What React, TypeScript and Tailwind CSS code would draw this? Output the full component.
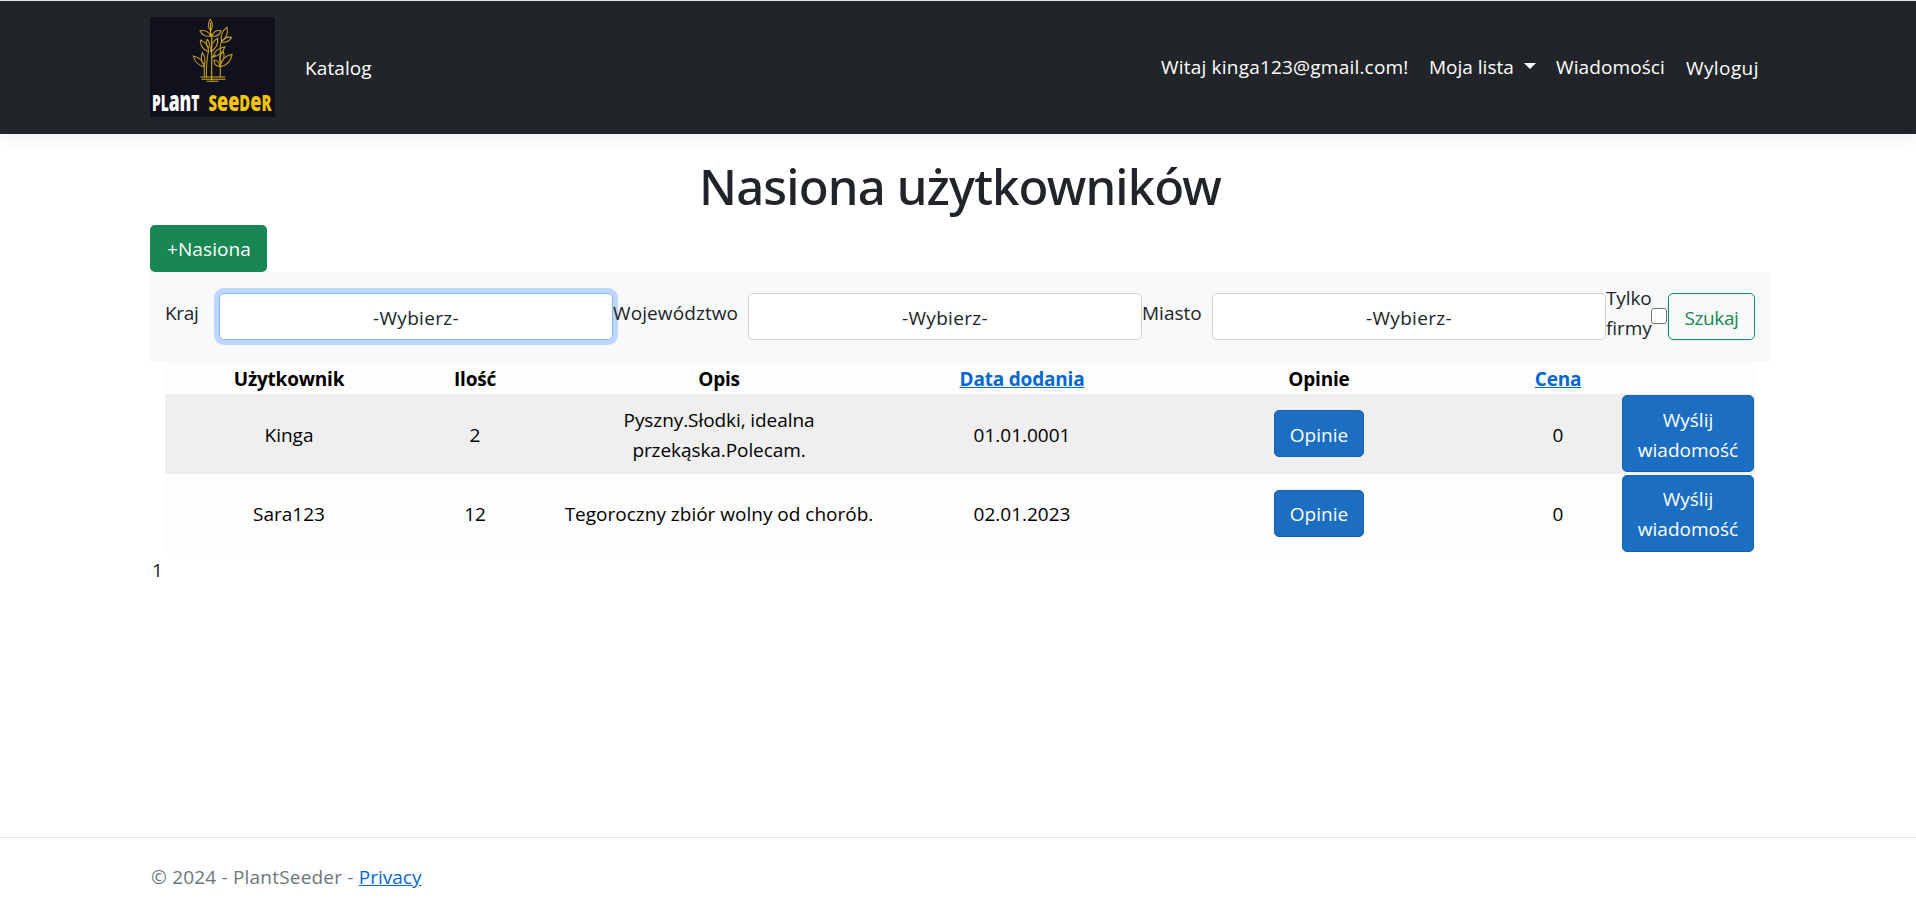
import type { ReactNode } from "react";

type Leaf = [number, number, number, number, number];

// Each leaf runs from its base to its tip; the last number is the bulge.
const leaves: Leaf[] = [
  [60.5, 14, 60.3, 2.3, 4],
  [60.8, 19, 50, 13.7, 4.5],
  [62, 19, 71, 13.7, 4.5],
  [71.5, 24.7, 77, 10.3, 5],
  [71.5, 25, 81.7, 20.3, 4],
  [58.5, 34.7, 50.3, 23, 5],
  [58.5, 31, 57.3, 22.5, 3],
  [60.7, 34.7, 67.7, 21.3, 5],
  [62.5, 40.3, 75, 29.7, 5],
  [54.3, 49.7, 43.3, 39, 5],
  [54, 48, 52.3, 35.7, 3.5],
  [70.3, 49.7, 82, 37.3, 6],
  [69.5, 49.5, 64, 43, 4],
  [70.5, 46, 73.3, 34.7, 4],
];

function leafPath([x1, y1, x2, y2, b]: Leaf) {
  const length = Math.hypot(x2 - x1, y2 - y1);
  const nx = (-(y2 - y1) / length) * b;
  const ny = ((x2 - x1) / length) * b;
  const mx = (x1 + x2) / 2;
  const my = (y1 + y2) / 2;
  return `M${x1} ${y1}Q${mx + nx} ${my + ny} ${x2} ${y2}Q${mx - nx} ${my - ny} ${x1} ${y1}`;
}

function Logo() {
  return (
    <svg viewBox="0 0 125 100" className="h-[100px] w-[125px] shrink-0 overflow-visible bg-[#11101d]">
      <g fill="none" stroke="#c09d1e" strokeWidth="1.1" strokeLinecap="round">
        {leaves.map((leaf, i) => (
          <path key={i} d={leafPath(leaf)} />
        ))}
        <path d="M60.6 6v13M61.7 17v46" stroke="#d2ae24" />
        <path d="M54.3 48v12M70.3 60V31Q70 26 72.5 23M56.5 60Q56 45 58.5 34M61.7 41l4-3" />
        <path d="M51 60h24M52 62.2h23M57 64.3h11" stroke="#d2ae24" />
      </g>
      <g fontFamily="Open Sans, sans-serif" fontWeight="800" fontSize="22">
        <text transform="translate(2 93.5) scale(0.625 1)" fill="#fff">
          PL<tspan fontSize="28">an</tspan>T
        </text>
        <text transform="translate(58.5 93.5) scale(0.67 1)" fill="#f2c50c">
          S<tspan fontSize="27">ee</tspan>D<tspan fontSize="27">e</tspan>R
        </text>
      </g>
    </svg>
  );
}

function Field({ label, labelClass, selectClass }: { label: string; labelClass: string; selectClass: string }) {
  return (
    <>
      <label className={`mt-[5px] shrink-0 whitespace-nowrap ${labelClass}`}>{label}</label>
      <div
        className={`flex h-[47px] shrink-0 items-center justify-center rounded-[5px] border bg-white pt-0.5 tracking-[0.3px] ${selectClass}`}
      >
        -Wybierz-
      </div>
    </>
  );
}

function BlueButton({ children, className }: { children: ReactNode; className: string }) {
  return (
    <button
      className={`rounded-[5px] border border-[#1861ac] bg-[#1b6ec2] text-center leading-[30px] text-white ${className}`}
    >
      {children}
    </button>
  );
}

const columns = "grid grid-cols-[248px_124px_364px_242px_352px_126px_134px] items-center text-center text-black";

const rows = [
  {
    user: "Kinga",
    amount: "2",
    description: ["Pyszny.Słodki, idealna", "przekąska.Polecam."],
    date: "01.01.0001",
    price: "0",
    rowClass: "h-20 bg-[#efefef] pb-px",
    cellClass: "pt-[3px]",
    buttonClass: "pt-0.5",
    descriptionClass: "pt-0.5 tracking-[-0.08px]",
  },
  {
    user: "Sara123",
    amount: "12",
    description: ["Tegoroczny zbiór wolny od chorób."],
    date: "02.01.2023",
    price: "0",
    rowClass: "h-[79px] bg-[#fdfdfd]",
    cellClass: "",
    buttonClass: "",
    descriptionClass: "",
  },
];

export default function App() {
  return (
    <div className="flex h-[911px] flex-col overflow-hidden bg-white font-['Open_Sans',sans-serif] text-[19px] leading-[30px] text-[#212529]">
      <header className="flex h-[134px] shrink-0 items-center border-t border-[#dfe9e3] bg-[#212529] pr-[156px] pb-px pl-[150px] whitespace-nowrap text-white shadow-[0_5px_15px_rgba(0,0,0,0.06)]">
        <Logo />
        <a className="mt-0.5 ml-[30px] tracking-[0.1px]">Katalog</a>
        <nav className="ml-auto flex items-center">
          <a className="w-[268px] tracking-[0.2px]">Witaj kinga123@gmail.com!</a>
          <a className="flex w-[127px] items-center gap-2.5">
            Moja lista
            <svg viewBox="0 0 12 6" className="mb-0.5 h-1.5 w-3">
              <path d="M0 0h12L6 6z" fill="#fff" />
            </svg>
          </a>
          <a className="w-[130px] tracking-[0.1px]">Wiadomości</a>
          <a className="mt-0.5 w-[74px] tracking-[0.4px]">Wyloguj</a>
        </nav>
      </header>

      <main className="ml-[150px] w-[1620px] grow pt-[22px]">
        <h1 className="h-[69px] text-center font-['Noto_Sans'] text-[49px] leading-[61px] font-medium tracking-[-0.85px]">
          Nasiona użytkowników
        </h1>
        <button className="block h-[47px] w-[117px] rounded-[5px] bg-[#198754] pl-px tracking-[0.1px] text-white">
          +Nasiona
        </button>

        <form className="flex h-[90px] items-start bg-[#f8f9fa] px-[15px] pt-[21px]">
          <Field
            label="Kraj"
            labelClass="w-[54px] tracking-[-0.3px]"
            selectClass="w-[394px] border-[#86b7fe] shadow-[0_0_0_5px_#bcd6fc]"
          />
          <Field
            label="Województwo"
            labelClass="relative w-[135px] tracking-[0.1px]"
            selectClass="w-[394px] border-[#ced4da]"
          />
          <Field label="Miasto" labelClass="w-[70px]" selectClass="w-[394px] border-[#ced4da]" />
          <label className="-mt-2.5 w-[45px] shrink-0 tracking-[-0.1px]">
            Tylko
            <br />
            firmy
          </label>
          <input
            type="checkbox"
            className="mt-[15px] size-4 shrink-0 appearance-none rounded-[3px] border border-[#767676] bg-white"
          />
          <button
            type="button"
            className="ml-px h-[47px] w-[87px] shrink-0 rounded-[5px] border border-[#198754] pt-0.5 tracking-[-0.4px] text-[#198754]"
          >
            Szukaj
          </button>
        </form>

        <div className="ml-[15px] w-[1590px]">
          <div className={`${columns} h-8 bg-[#fdfdfd] pt-px font-bold tracking-[-0.2px]`}>
            <span>Użytkownik</span>
            <span>Ilość</span>
            <span>Opis</span>
            <a className="text-[#0366d6] underline">Data dodania</a>
            <span>Opinie</span>
            <a className="text-[#0366d6] underline">Cena</a>
            <span />
          </div>
          {rows.map((row) => (
            <div key={row.user} className={`${columns} ${row.rowClass}`}>
              <span className={row.cellClass}>{row.user}</span>
              <span className={row.cellClass}>{row.amount}</span>
              <span className={row.descriptionClass}>
                {row.description.map((line) => (
                  <span key={line} className="block">
                    {line}
                  </span>
                ))}
              </span>
              <span className={row.cellClass}>{row.date}</span>
              <BlueButton className={`h-[47px] w-[90px] justify-self-center ${row.buttonClass}`}>Opinie</BlueButton>
              <span className={row.cellClass}>{row.price}</span>
              <BlueButton className={`h-[77px] w-[132px] justify-self-center ${row.buttonClass}`}>
                Wyślij
                <br />
                wiadomość
              </BlueButton>
            </div>
          ))}
        </div>
        <div className="mt-0.5 pl-0.5">1</div>
      </main>

      <footer className="h-[74px] shrink-0 border-t border-[#dee2e6] pt-6 pl-[151px] tracking-[0.2px] text-[#6c757d]">
        © 2024 - PlantSeeder - <a className="tracking-normal text-[#0366d6] underline">Privacy</a>
      </footer>
    </div>
  );
}
